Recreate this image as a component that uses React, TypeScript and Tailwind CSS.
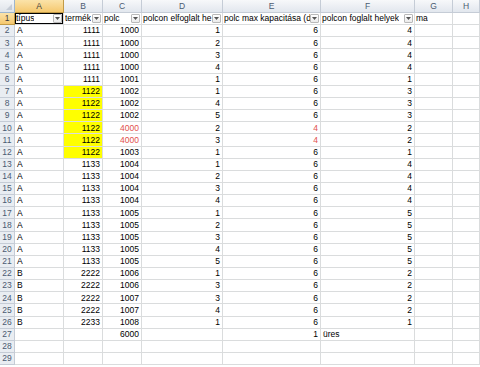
import React from 'react';

type Cell = { v: string; right?: boolean; red?: boolean; yellow?: boolean };

const cols = ['A', 'B', 'C', 'D', 'E', 'F', 'G', 'H'];
const headers = ['típus', 'termék', 'polc', 'polcon elfoglalt he', 'polc max kapacitása (db', 'polcon foglalt helyek', 'ma', ''];

const raw: [string, string, string, string, string, string][] = [
  ['A', '1111', '1000', '1', '6', '4'],
  ['A', '1111', '1000', '2', '6', '4'],
  ['A', '1111', '1000', '3', '6', '4'],
  ['A', '1111', '1000', '4', '6', '4'],
  ['A', '1111', '1001', '1', '6', '1'],
  ['A', '1122', '1002', '1', '6', '3'],
  ['A', '1122', '1002', '4', '6', '3'],
  ['A', '1122', '1002', '5', '6', '3'],
  ['A', '1122', '4000', '2', '4', '2'],
  ['A', '1122', '4000', '3', '4', '2'],
  ['A', '1122', '1003', '1', '6', '1'],
  ['A', '1133', '1004', '1', '6', '4'],
  ['A', '1133', '1004', '2', '6', '4'],
  ['A', '1133', '1004', '3', '6', '4'],
  ['A', '1133', '1004', '4', '6', '4'],
  ['A', '1133', '1005', '1', '6', '5'],
  ['A', '1133', '1005', '2', '6', '5'],
  ['A', '1133', '1005', '3', '6', '5'],
  ['A', '1133', '1005', '4', '6', '5'],
  ['A', '1133', '1005', '5', '6', '5'],
  ['B', '2222', '1006', '1', '6', '2'],
  ['B', '2222', '1006', '3', '6', '2'],
  ['B', '2222', '1007', '3', '6', '2'],
  ['B', '2222', '1007', '4', '6', '2'],
  ['B', '2233', '1008', '1', '6', '1'],
];

function buildRows(): Cell[][] {
  const rows: Cell[][] = raw.map((r, i) => {
    const rowNum = i + 2;
    const yellow = rowNum >= 7 && rowNum <= 12;
    const red = r[2] === '4000';
    return [
      { v: r[0] },
      { v: r[1], right: true, yellow },
      { v: r[2], right: true, red },
      { v: r[3], right: true },
      { v: r[4], right: true, red },
      { v: r[5], right: true },
      { v: '' },
      { v: '' },
    ];
  });
  rows.push([{ v: '' }, { v: '' }, { v: '6000', right: true }, { v: '' }, { v: '1', right: true }, { v: 'üres' }, { v: '' }, { v: '' }]);
  rows.push(cols.map(() => ({ v: '' })));
  rows.push(cols.map(() => ({ v: '' })));
  return rows;
}

function FilterButton() {
  return (
    <span className="ml-auto flex h-[9px] w-[9px] shrink-0 items-center justify-center rounded-[1px] border border-[#b9b9b9] bg-gradient-to-b from-white to-[#ebebeb]">
      <svg width="5" height="3" viewBox="0 0 5 3">
        <path d="M0 0h5L2.5 3z" fill="#555" />
      </svg>
    </span>
  );
}

export default function App() {
  const rows = buildRows();
  const grid = 'grid grid-cols-[15px_49px_39px_39px_81px_98px_94px_38px_1fr]';

  return (
    <div className="h-[367px] w-[480px] overflow-hidden bg-white text-[8.5px] leading-none text-black" style={{ fontFamily: '"Liberation Sans", Arial, sans-serif' }}>
      {/* column letters */}
      <div className={`${grid} h-[13px]`}>
        <div className="relative border-b border-r border-[#9eb6ce] bg-gradient-to-b from-[#f3f5f8] to-[#dfe4ea]">
          <svg className="absolute bottom-[2px] right-[2px]" width="6" height="6" viewBox="0 0 6 6">
            <path d="M6 0v6H0z" fill="#c5ccd6" />
          </svg>
        </div>
        {cols.map((c) => (
          <div
            key={c}
            className={
              c === 'A'
                ? 'flex items-center justify-center border-b border-r border-[#c29b47] bg-gradient-to-b from-[#fbe3a9] to-[#f5c86d] text-[#3c3c3c]'
                : 'flex items-center justify-center border-b border-r border-[#c5ccd6] bg-gradient-to-b from-[#f7f8fa] to-[#e2e7ee] text-[#4b5b71]'
            }
          >
            {c}
          </div>
        ))}
      </div>

      {/* header row 1 */}
      <div className={`${grid} h-[12.15px]`}>
        <div className="flex items-center justify-center border-b border-r border-[#c29b47] bg-gradient-to-b from-[#fbe3a9] to-[#f5c86d] text-[#3c3c3c]">1</div>
        {headers.map((h, i) => (
          <div key={i} className="relative flex items-center overflow-hidden whitespace-nowrap border-b border-r border-[#dadcdd] pl-[1px] pr-[1px]">
            <span className="min-w-0 overflow-hidden">{h}</span>
            {i < 6 && <FilterButton />}
            {i === 0 && <div className="absolute -left-[1px] -top-[1px] bottom-[-1px] right-[-1px] border-2 border-black" />}
          </div>
        ))}
      </div>

      {rows.map((r, ri) => (
        <div key={ri} className={`${grid} h-[12.15px]`}>
          <div className="flex items-center justify-center border-b border-r border-[#c5ccd6] bg-[#e9edf2] text-[#4b5b71]">{ri + 2}</div>
          {r.map((c, ci) => (
            <div
              key={ci}
              className={[
                'flex items-center whitespace-nowrap border-b border-r border-[#dadcdd] px-[2px]',
                c.right ? 'justify-end' : 'justify-start',
                c.yellow ? 'bg-[#ffff00]' : '',
                c.red ? 'text-[#e2514d]' : '',
              ].join(' ')}
            >
              {c.v}
            </div>
          ))}
        </div>
      ))}
    </div>
  );
}
